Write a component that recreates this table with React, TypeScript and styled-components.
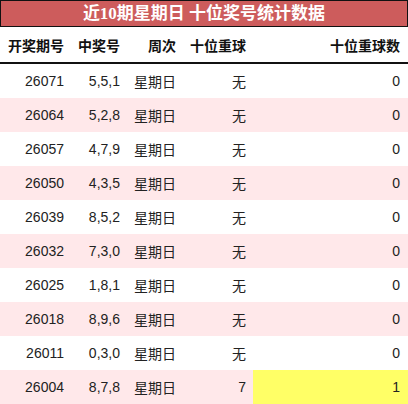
import React from "react";
import styled, { createGlobalStyle } from "styled-components";

const Global = createGlobalStyle`
  html, body { margin: 0; padding: 0; background: #fff; }
  body { font-family: "Liberation Sans", "Noto Sans CJK SC", sans-serif; }
`;

const Wrap = styled.div`
  width: 408px;
  display: flex;
  flex-direction: column;
`;

const Title = styled.div`
  height: 25px;
  border: 1px solid #111;
  background: #cd5c5c;
  color: #fff;
  font-family: "Liberation Serif", "Noto Sans CJK SC", serif;
  font-weight: bold;
  font-size: 17px;
  line-height: 25px;
  text-align: center;
`;

const cols = "71px 56px 56px 70px 1fr";

const HeadRow = styled.div`
  display: grid;
  grid-template-columns: ${cols};
  height: 34px;
  margin-top: 1px;
  border-bottom: 2px solid #111;
  align-items: center;
  font-weight: bold;
  font-size: 14px;
  color: #111;
`;

const Row = styled.div<{ $alt: boolean }>`
  display: grid;
  grid-template-columns: ${cols};
  height: 34px;
  background: ${(p) => (p.$alt ? "#ffe8ea" : "#fff")};
  font-size: 14px;
  color: #222;
`;

const Cell = styled.div<{ $hl?: boolean }>`
  display: flex;
  align-items: center;
  justify-content: flex-end;
  padding-right: 7px;
  white-space: nowrap;
  background: ${(p) => (p.$hl ? "#ffff66" : "transparent")};
`;

const HeadCell = styled(Cell)`
  padding-right: 7px;
`;

const LastHead = styled(HeadCell)`
  padding-right: 8px;
`;

const LastCell = styled(Cell)`
  padding-right: 8px;
`;

const data: [string, string, string, string][] = [
  ["26071", "5,5,1", "无", "0"],
  ["26064", "5,2,8", "无", "0"],
  ["26057", "4,7,9", "无", "0"],
  ["26050", "4,3,5", "无", "0"],
  ["26039", "8,5,2", "无", "0"],
  ["26032", "7,3,0", "无", "0"],
  ["26025", "1,8,1", "无", "0"],
  ["26018", "8,9,6", "无", "0"],
  ["26011", "0,3,0", "无", "0"],
  ["26004", "8,7,8", "7", "1"],
];

export default function App() {
  return (
    <Wrap>
      <Global />
      <Title>近10期星期日 十位奖号统计数据</Title>
      <HeadRow>
        <HeadCell>开奖期号</HeadCell>
        <HeadCell>中奖号</HeadCell>
        <HeadCell>周次</HeadCell>
        <HeadCell>十位重球</HeadCell>
        <LastHead>十位重球数</LastHead>
      </HeadRow>
      {data.map((d, i) => (
        <Row key={d[0]} $alt={i % 2 === 1}>
          <Cell>{d[0]}</Cell>
          <Cell>{d[1]}</Cell>
          <Cell>星期日</Cell>
          <Cell>{d[2]}</Cell>
          <LastCell $hl={d[3] !== "0"}>{d[3]}</LastCell>
        </Row>
      ))}
    </Wrap>
  );
}
